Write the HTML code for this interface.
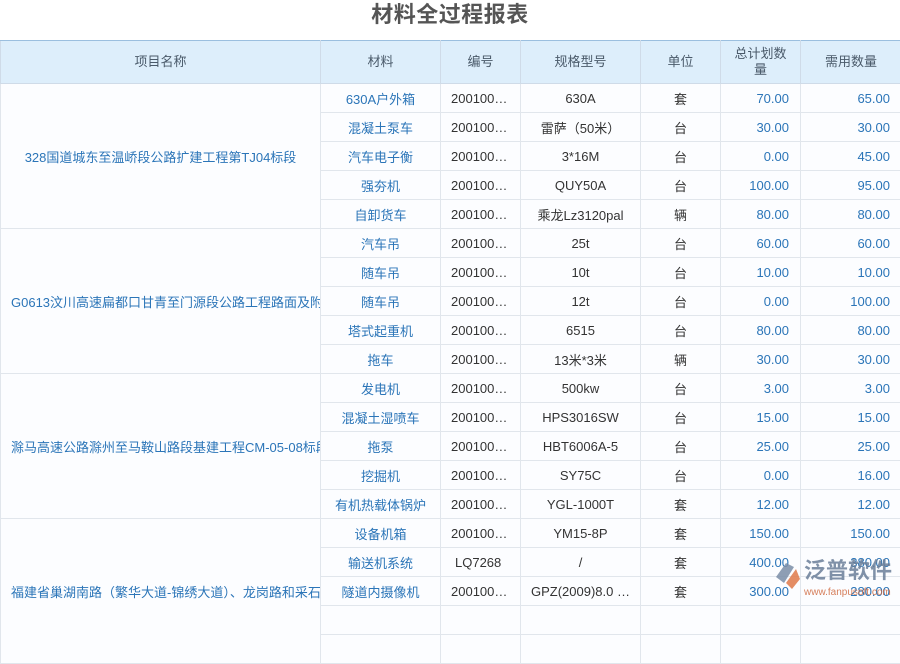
<!DOCTYPE html>
<html><head><meta charset="utf-8"><style>
*{margin:0;padding:0;box-sizing:border-box}
body{width:900px;height:600px;overflow:hidden;background:#fff;font-family:"Liberation Sans","Noto Sans CJK SC",sans-serif;font-size:13px;color:#333;position:relative}
.title{position:absolute;top:1px;left:0;width:900px;text-align:center;font-size:22px;font-weight:bold;color:#555;line-height:28px;letter-spacing:0.5px}
table{position:absolute;top:40px;left:0;border-collapse:collapse;table-layout:fixed;width:901px}
th{height:43px;background:#ddeefb;color:#4a5a6a;font-weight:normal;border:1px solid #cfdbe8;border-top:1px solid #9bbfdf;line-height:16px;font-size:13px}
td{height:29px;border:1px solid #e1e6ec;white-space:nowrap;overflow:hidden;text-overflow:ellipsis;padding:0 10px;background:#fcfdff}
td.p{color:#2b75b8;text-align:left;padding:0 10px;text-overflow:clip;vertical-align:middle}
td.m{color:#2b75b8;text-align:center}
td.c{text-align:left}
td.s{text-align:center}
td.u{text-align:center}
td.n{color:#2b75b8;text-align:right;padding-right:11px}
.logo{position:absolute;left:772px;top:553px;width:128px;height:47px}
</style></head><body>
<div class="title">材料全过程报表</div>
<table>
<colgroup><col style="width:320px"><col style="width:120px"><col style="width:80px"><col style="width:120px"><col style="width:80px"><col style="width:80px"><col style="width:101px"></colgroup>
<tr><th>项目名称</th><th>材料</th><th>编号</th><th>规格型号</th><th>单位</th><th>总计划数<br>量</th><th>需用数量</th></tr>
<tr><td class="p" rowspan="5" style="text-align:center">328国道城东至温峤段公路扩建工程第TJ04标段</td><td class="m">630A户外箱</td><td class="c">200100…</td><td class="s">630A</td><td class="u">套</td><td class="n">70.00</td><td class="n">65.00</td></tr>
<tr><td class="m">混凝土泵车</td><td class="c">200100…</td><td class="s">雷萨（50米）</td><td class="u">台</td><td class="n">30.00</td><td class="n">30.00</td></tr>
<tr><td class="m">汽车电子衡</td><td class="c">200100…</td><td class="s">3*16M</td><td class="u">台</td><td class="n">0.00</td><td class="n">45.00</td></tr>
<tr><td class="m">强夯机</td><td class="c">200100…</td><td class="s">QUY50A</td><td class="u">台</td><td class="n">100.00</td><td class="n">95.00</td></tr>
<tr><td class="m">自卸货车</td><td class="c">200100…</td><td class="s">乘龙Lz3120pal</td><td class="u">辆</td><td class="n">80.00</td><td class="n">80.00</td></tr>
<tr><td class="p" rowspan="5">G0613汶川高速扁都口甘青至门源段公路工程路面及附属工程</td><td class="m">汽车吊</td><td class="c">200100…</td><td class="s">25t</td><td class="u">台</td><td class="n">60.00</td><td class="n">60.00</td></tr>
<tr><td class="m">随车吊</td><td class="c">200100…</td><td class="s">10t</td><td class="u">台</td><td class="n">10.00</td><td class="n">10.00</td></tr>
<tr><td class="m">随车吊</td><td class="c">200100…</td><td class="s">12t</td><td class="u">台</td><td class="n">0.00</td><td class="n">100.00</td></tr>
<tr><td class="m">塔式起重机</td><td class="c">200100…</td><td class="s">6515</td><td class="u">台</td><td class="n">80.00</td><td class="n">80.00</td></tr>
<tr><td class="m">拖车</td><td class="c">200100…</td><td class="s">13米*3米</td><td class="u">辆</td><td class="n">30.00</td><td class="n">30.00</td></tr>
<tr><td class="p" rowspan="5">滁马高速公路滁州至马鞍山路段基建工程CM-05-08标段</td><td class="m">发电机</td><td class="c">200100…</td><td class="s">500kw</td><td class="u">台</td><td class="n">3.00</td><td class="n">3.00</td></tr>
<tr><td class="m">混凝土湿喷车</td><td class="c">200100…</td><td class="s">HPS3016SW</td><td class="u">台</td><td class="n">15.00</td><td class="n">15.00</td></tr>
<tr><td class="m">拖泵</td><td class="c">200100…</td><td class="s">HBT6006A-5</td><td class="u">台</td><td class="n">25.00</td><td class="n">25.00</td></tr>
<tr><td class="m">挖掘机</td><td class="c">200100…</td><td class="s">SY75C</td><td class="u">台</td><td class="n">0.00</td><td class="n">16.00</td></tr>
<tr><td class="m">有机热载体锅炉</td><td class="c">200100…</td><td class="s">YGL-1000T</td><td class="u">套</td><td class="n">12.00</td><td class="n">12.00</td></tr>
<tr><td class="p" rowspan="5">福建省巢湖南路（繁华大道-锦绣大道）、龙岗路和采石路工程</td><td class="m">设备机箱</td><td class="c">200100…</td><td class="s">YM15-8P</td><td class="u">套</td><td class="n">150.00</td><td class="n">150.00</td></tr>
<tr><td class="m">输送机系统</td><td class="c" style="padding-left:14px">LQ7268</td><td class="s">/</td><td class="u">套</td><td class="n">400.00</td><td class="n">380.00</td></tr>
<tr><td class="m">隧道内摄像机</td><td class="c">200100…</td><td class="s">GPZ(2009)8.0 …</td><td class="u">套</td><td class="n">300.00</td><td class="n">280.00</td></tr>
<tr><td class="m">&nbsp;</td><td class="c"></td><td class="s"></td><td class="u"></td><td class="n"></td><td class="n"></td></tr>
<tr><td class="m">&nbsp;</td><td class="c"></td><td class="s"></td><td class="u"></td><td class="n"></td><td class="n"></td></tr>
</table>
<svg class="logo" viewBox="0 0 128 47" style="opacity:0.85">
<path d="M4 24 L14 10 L22 14 L12 30 Z" fill="#7b8ea8"/>
<path d="M14 30 L24 16 L28 26 L20 36 Z" fill="#e07a4a"/>
<text x="32" y="25" font-family="Liberation Sans,Noto Sans CJK SC,sans-serif" font-size="22" fill="#6b7f99" font-weight="bold">泛普软件</text>
<text x="32" y="42" font-family="Liberation Sans,sans-serif" font-size="10" fill="#d06a40">www.fanpusoft.com</text>
</svg>
</body></html>
